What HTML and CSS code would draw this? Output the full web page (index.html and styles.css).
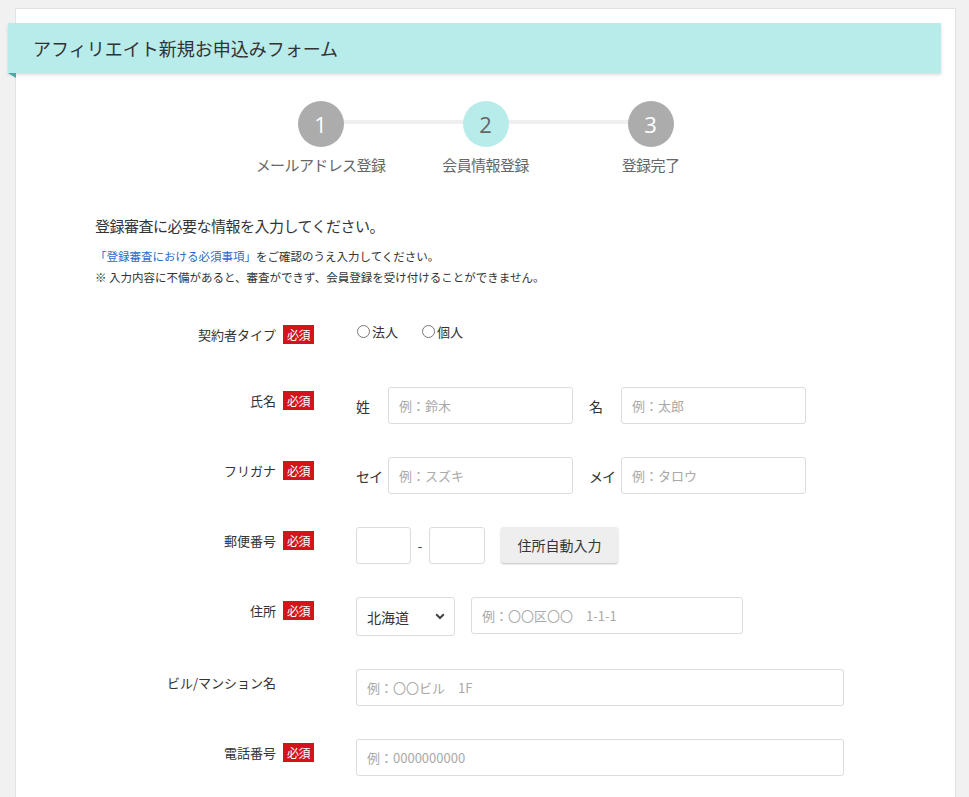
FILE: index.html
```html
<!DOCTYPE html>
<html lang="ja">
<head>
<meta charset="utf-8">
<title>アフィリエイト新規お申込みフォーム</title>
<link rel="stylesheet" href="styles.css">
</head>
<body>
<div class="card">
  <div class="head"><h1 class="head-title">アフィリエイト新規お申込みフォーム</h1></div>

  <ol class="steps">
    <li class="step"><span class="num">1</span><span class="step-label">メールアドレス登録</span></li>
    <li class="step active"><span class="num">2</span><span class="step-label">会員情報登録</span></li>
    <li class="step"><span class="num">3</span><span class="step-label">登録完了</span></li>
  </ol>

  <div class="intro">
    <p class="lead">登録審査に必要な情報を入力してください。</p>
    <p class="note"><a class="link" href="#">「登録審査における必須事項」</a>をご確認のうえ入力してください。</p>
    <p class="note">※ 入力内容に不備があると、審査ができず、会員登録を受け付けることができません。</p>
  </div>

  <div class="form">
    <div class="row row-first">
      <div class="lbl"><span class="lbl-text">契約者タイプ</span><span class="badge">必須</span></div>
      <div class="fields radios">
        <label class="radio"><input type="radio" name="type">法人</label>
        <label class="radio"><input type="radio" name="type">個人</label>
      </div>
    </div>

    <div class="row">
      <div class="lbl"><span class="lbl-text">氏名</span><span class="badge">必須</span></div>
      <div class="fields">
        <div class="pair"><span class="sub">姓</span><input class="input w185" type="text" placeholder="例：鈴木"></div>
        <div class="pair"><span class="sub">名</span><input class="input w185" type="text" placeholder="例：太郎"></div>
      </div>
    </div>

    <div class="row">
      <div class="lbl"><span class="lbl-text">フリガナ</span><span class="badge">必須</span></div>
      <div class="fields">
        <div class="pair"><span class="sub">セイ</span><input class="input w185" type="text" placeholder="例：スズキ"></div>
        <div class="pair"><span class="sub">メイ</span><input class="input w185" type="text" placeholder="例：タロウ"></div>
      </div>
    </div>

    <div class="row">
      <div class="lbl"><span class="lbl-text">郵便番号</span><span class="badge">必須</span></div>
      <div class="fields">
        <input class="input w55" type="text">
        <span class="dash">-</span>
        <input class="input w56" type="text">
        <button class="btn" type="button">住所自動入力</button>
      </div>
    </div>

    <div class="row">
      <div class="lbl"><span class="lbl-text">住所</span><span class="badge">必須</span></div>
      <div class="fields">
        <div class="select-wrap">
          <select class="select"><option>北海道</option></select>
          <svg class="chev" width="10" height="7" viewBox="0 0 10 7"><path d="M1.2 1.2 L5 5 L8.8 1.2" fill="none" stroke="#444" stroke-width="2"/></svg>
        </div>
        <input class="input w272" type="text" placeholder="例：〇〇区〇〇　1-1-1">
      </div>
    </div>

    <div class="row">
      <div class="lbl no-badge"><span class="lbl-text">ビル/マンション名</span></div>
      <div class="fields">
        <input class="input w488" type="text" placeholder="例：〇〇ビル　1F">
      </div>
    </div>

    <div class="row">
      <div class="lbl"><span class="lbl-text">電話番号</span><span class="badge">必須</span></div>
      <div class="fields">
        <input class="input w488" type="text" placeholder="例：0000000000">
      </div>
    </div>
  </div>
</div>
</body>
</html>
```

FILE: styles.css
```css
* { box-sizing: border-box; }

html, body {
  margin: 0;
  background: #f1f1f1;
}

body {
  padding: 8px 13px 0 15px;
  font-family: "Noto Sans CJK JP", "Noto Sans", sans-serif;
  color: #333;
}

.card {
  background: #fff;
  border: 1px solid #e2e2e2;
  border-bottom: none;
  min-height: 800px;
  padding-top: 14px;
}

/* header ribbon */
.head {
  position: relative;
  margin: 0 14px 0 -8px;
  height: 50px;
  background: #b8ecea;
  box-shadow: 0 2px 3px rgba(0, 0, 0, 0.14);
  display: flex;
  align-items: center;
  padding-left: 25px;
}
.head::after {
  content: "";
  position: absolute;
  left: 0;
  bottom: -5px;
  border-top: 5px solid #4aa7a6;
  border-left: 8px solid transparent;
}
.head-title {
  margin: 0;
  font-size: 18px;
  font-weight: 400;
  line-height: 24px;
  color: #333;
}

/* steps */
.steps {
  position: relative;
  list-style: none;
  margin: 28px auto 0;
  padding: 0;
  width: 495px;
  display: grid;
  grid-template-columns: repeat(3, 165px);
}
.steps::before {
  content: "";
  position: absolute;
  left: 82px;
  right: 82px;
  top: 19px;
  height: 4px;
  background: #efefef;
}
.step {
  position: relative;
  display: flex;
  flex-direction: column;
  align-items: center;
}
.num {
  width: 46px;
  height: 46px;
  border-radius: 50%;
  background: #acacac;
  color: #fff;
  display: flex;
  align-items: center;
  justify-content: center;
  font-family: "Open Sans", "Noto Sans", sans-serif;
  font-size: 22px;
  font-weight: 400;
  line-height: 1;
}
.step.active .num {
  background: #b8ecea;
  color: #666;
}
.step-label {
  margin-top: 8px;
  font-size: 15px;
  line-height: 20px;
  color: #666;
  white-space: nowrap;
  letter-spacing: -0.6px;
}

/* intro */
.intro {
  padding-left: 79px;
  margin-top: 40px;
}
.lead {
  margin: 0 0 9px;
  font-size: 15px;
  line-height: 22px;
  letter-spacing: -0.5px;
  color: #333;
}
.note {
  margin: 0;
  font-size: 11.5px;
  line-height: 21px;
  color: #333;
}
.link {
  color: #2a6ac8;
  text-decoration: none;
}

/* form */
.form {
  margin-top: 33px;
}
.row {
  display: flex;
  margin-bottom: 33px;
}
.row-first {
  height: 33px;
}
.lbl {
  width: 298px;
  height: 27px;
  flex: none;
  display: flex;
  justify-content: flex-end;
  align-items: center;
  font-size: 13px;
  line-height: 18px;
  color: #333;
}
.lbl.no-badge {
  padding-right: 38px;
}
.badge {
  margin-left: 7px;
  width: 31px;
  height: 19px;
  background: #d2151d;
  color: #fff;
  font-size: 12px;
  line-height: 19px;
  text-align: center;
  letter-spacing: -0.5px;
}
.fields {
  margin-left: 42px;
  display: flex;
  align-items: flex-start;
}
.radios {
  align-items: center;
  height: 20px;
  padding-top: 1px;
}
.radio {
  display: flex;
  align-items: center;
  font-size: 13px;
  line-height: 18px;
  margin-right: 23px;
}
.radio input {
  margin: 0 2px 0 1px;
  width: 13px;
  height: 13px;
}
.pair {
  display: flex;
  align-items: center;
  margin-right: 16px;
}
.sub {
  width: 32px;
  font-size: 14px;
  color: #333;
  white-space: nowrap;
  letter-spacing: -1px;
}
.input {
  height: 37px;
  border: 1px solid #dcdcdc;
  border-radius: 3px;
  padding: 0 10px;
  font-family: inherit;
  font-size: 13px;
  color: #333;
  background: #fff;
  outline: none;
}
.input::placeholder {
  color: #a9a9a9;
}
.w185 { width: 185px; }
.w55 { width: 55px; }
.w56 { width: 56px; }
.w272 { width: 272px; }
.w488 { width: 488px; }

.dash {
  width: 18px;
  text-align: center;
  font-size: 13px;
  line-height: 37px;
  color: #333;
}
.btn {
  margin-left: 16px;
  width: 117px;
  height: 36px;
  border: none;
  border-radius: 3px;
  background: #eeeeee;
  box-shadow: 0 1px 2px rgba(0, 0, 0, 0.25);
  font-family: inherit;
  font-size: 14px;
  color: #333;
}

.select-wrap {
  position: relative;
  margin-right: 16px;
}
.select {
  appearance: none;
  -webkit-appearance: none;
  width: 99px;
  height: 39px;
  border: 1px solid #dcdcdc;
  border-radius: 3px;
  background: #fff;
  padding: 0 0 0 10px;
  font-family: inherit;
  font-size: 14px;
  color: #333;
}
.chev {
  position: absolute;
  right: 10px;
  top: 16px;
}
```
